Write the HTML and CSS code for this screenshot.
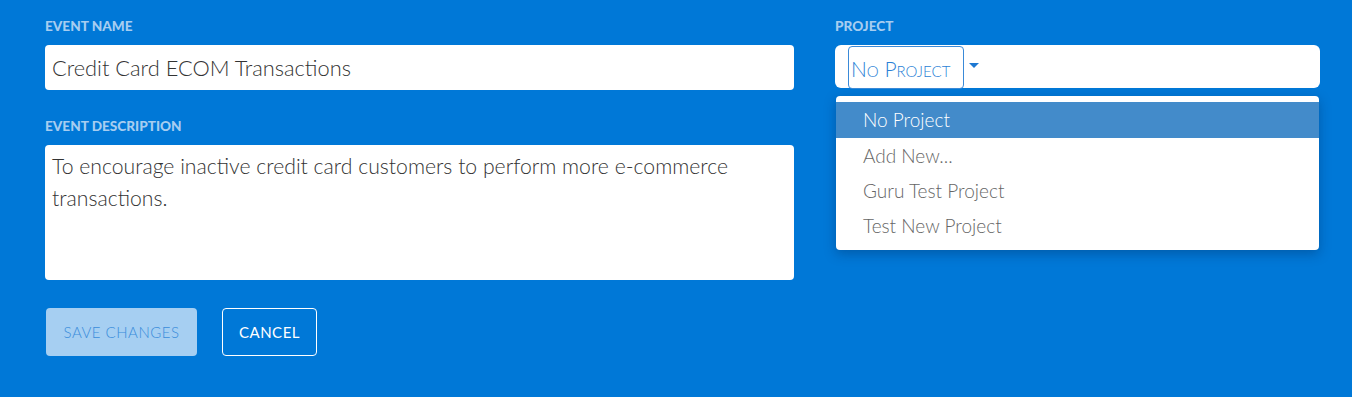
FILE: index.html
```html
<!DOCTYPE html>
<html lang="en">
<head>
    <meta charset="UTF-8">
    <meta name="viewport" content="width=device-width, initial-scale=1.0">
    <title>Edit Event</title>
    <link rel="stylesheet" href="styles.css">
</head>
<body>
    <div class="event-form">
        <div class="col-left">
            <label class="field-label">Event Name</label>
            <div class="field-input">Credit Card ECOM Transactions</div>

            <label class="field-label label-desc">Event Description</label>
            <div class="field-textarea">To encourage inactive credit card customers to perform more e-commerce transactions.</div>

            <div class="form-btns">
                <button class="btn btn-save">Save Changes</button>
                <button class="btn btn-cancel">Cancel</button>
            </div>
        </div>

        <div class="col-right">
            <label class="field-label">Project</label>
            <div class="project-select">
                <span class="project-toggle">No Project</span>
                <span class="caret"></span>
            </div>
            <ul class="project-menu">
                <li class="active">No Project</li>
                <li>Add New...</li>
                <li>Guru Test Project</li>
                <li>Test New Project</li>
            </ul>
        </div>
    </div>
</body>
</html>
```

FILE: styles.css
```css
body {
    margin: 0;
    background-color: #0078d7;
    font-family: Lato, "Open Sans", Arial, sans-serif;
    height: 397px;
    overflow: hidden;
}

.event-form {
    display: flex;
    gap: 41px;
    padding: 19px 0 0 45px;
}

.col-left {
    width: 749px;
}

.col-right {
    width: 485px;
    position: relative;
}

.field-label {
    display: block;
    color: #a6cdf0;
    font-size: 13.6px;
    font-weight: 900;
    line-height: 15px;
    text-transform: uppercase;
    margin-bottom: 11px;
}

.label-desc {
    margin-top: 29px;
}

.field-input {
    background: #fff;
    border-radius: 4px;
    height: 45px;
    line-height: 45px;
    padding-left: 7px;
    font-size: 21.8px;
    font-weight: 300;
    color: #333;
    box-sizing: border-box;
}

.field-textarea {
    background: #fff;
    border-radius: 4px;
    height: 135px;
    padding: 5px 7px;
    font-size: 21.2px;
    font-weight: 300;
    line-height: 32px;
    color: #333;
    box-sizing: border-box;
}

.form-btns {
    display: flex;
    gap: 25px;
    margin-top: 28px;
}

.btn {
    font-family: Lato, Arial, sans-serif;
    font-size: 15px;
    font-weight: 300;
    text-transform: uppercase;
    letter-spacing: 0.5px;
    height: 48px;
    border-radius: 4px;
    cursor: pointer;
}

.btn-save {
    margin-left: 1px;
    width: 151px;
    background-color: #a6cff2;
    color: #3a8ddb;
    border: none;
}

.btn-cancel {
    width: 95px;
    background-color: transparent;
    color: #fff;
    border: 1px solid #fff;
    font-weight: 400;
}

.project-select {
    display: flex;
    align-items: center;
    background: #fff;
    border-radius: 6px;
    height: 43px;
    padding-left: 13px;
}

.project-toggle {
    align-self: flex-start;
    margin-top: 1px;
    height: 43px;
    width: 116px;
    box-sizing: border-box;
    border: 1px solid #3a8ad8;
    border-radius: 4px;
    font-variant: small-caps;
    font-size: 21px;
    font-weight: 300;
    color: #2b7fd6;
    line-height: 43px;
    padding-left: 2px;
    white-space: nowrap;
}

.caret {
    margin-left: 5px;
    border-left: 5px solid transparent;
    border-right: 5px solid transparent;
    border-top: 5px solid #1d78d2;
    margin-top: -2px;
}

.project-menu {
    position: absolute;
    top: 77px;
    left: 1px;
    right: 1px;
    margin: 0;
    padding: 6px 0 7px;
    list-style: none;
    background: #fff;
    border-radius: 4px;
    box-shadow: 0 4px 12px rgba(0, 40, 90, 0.35);
}

.project-menu li {
    height: 35px;
    line-height: 35px;
    padding-left: 27px;
    font-size: 19px;
    font-weight: 300;
    color: #666;
}

.project-menu li.active {
    height: 36px;
    background-color: #438bca;
    color: #fff;
}
```
